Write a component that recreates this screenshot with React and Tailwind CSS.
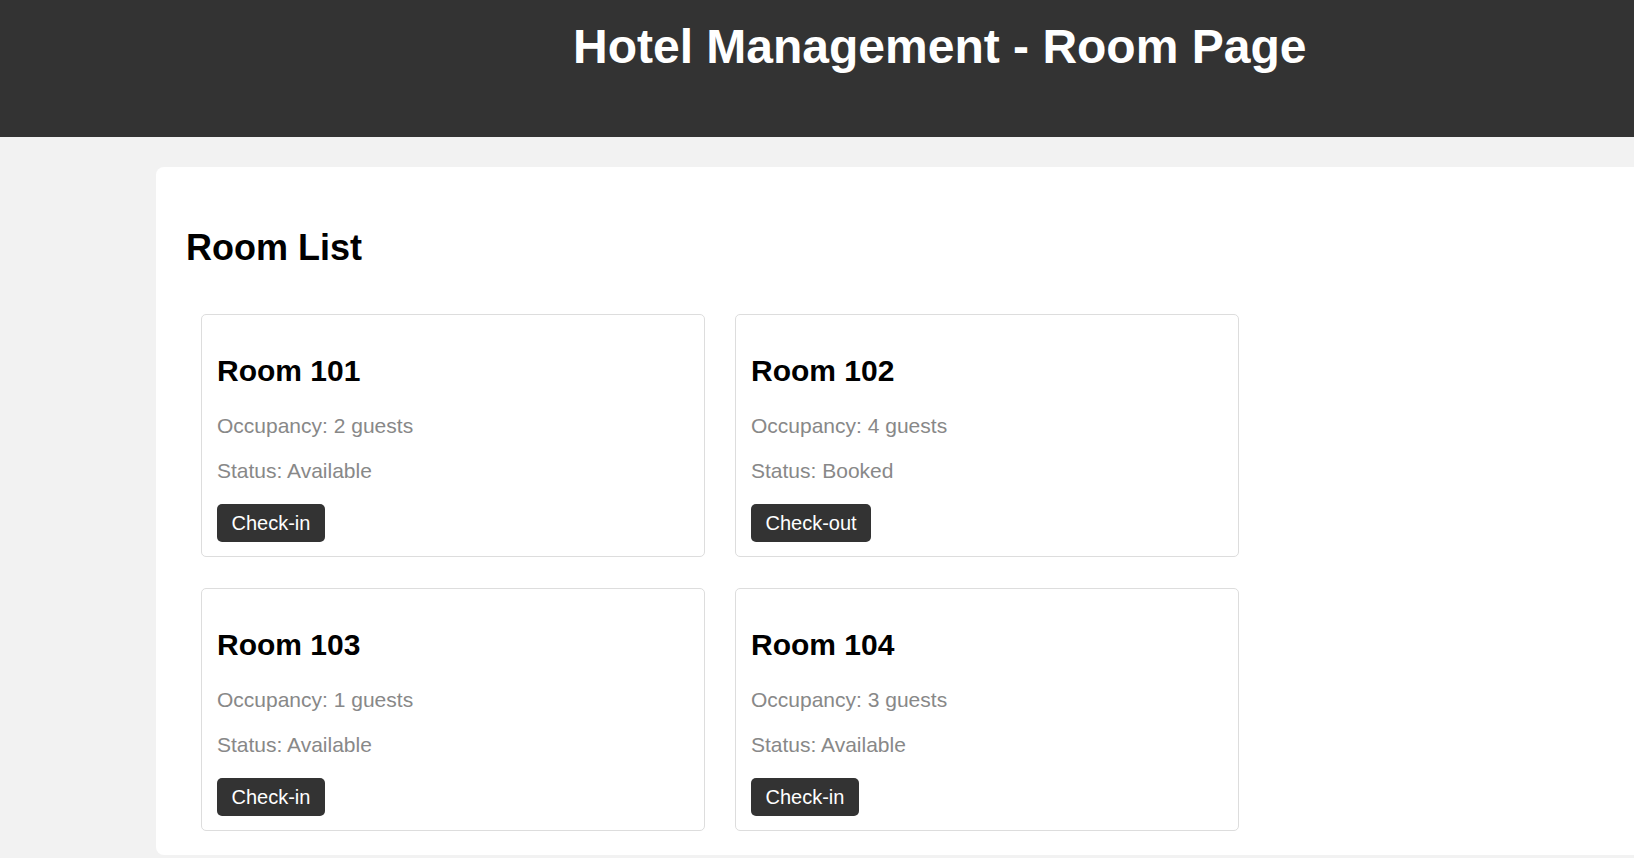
import React from 'react';

const rooms = [
  { id: 101, occupancy: 2, status: 'Available' },
  { id: 102, occupancy: 4, status: 'Booked' },
  { id: 103, occupancy: 1, status: 'Available' },
  { id: 104, occupancy: 3, status: 'Available' },
];

const RoomCard = ({ room }) => {
  const booked = room.status === 'Booked';
  return (
    <div className="w-[504px] h-[243px] border border-[#dddddd] rounded-[5px] bg-white px-[15px] pt-[39px]">
      <h2 className="text-[30px] leading-[34.5px] font-bold text-black">Room {room.id}</h2>
      <p className="mt-[25px] text-[21px] leading-[24px] text-[#888888]">
        Occupancy: {room.occupancy} guests
      </p>
      <p className="mt-[21px] text-[21px] leading-[24px] text-[#888888]">Status: {room.status}</p>
      <button className="mt-[21.5px] h-[38px] px-[14.5px] rounded-[5px] bg-[#333333] text-white text-[20px] leading-[23px]">
        {booked ? 'Check-out' : 'Check-in'}
      </button>
    </div>
  );
};

const App = () => {
  return (
    <div className="min-h-screen bg-[#f2f2f2] font-['Liberation_Sans',Arial,sans-serif]">
      {/* Header */}
      <header className="h-[137px] bg-[#333333] pt-[19px] pl-[573px]">
        <h1 className="text-[48px] leading-[55px] font-bold text-white whitespace-nowrap">
          Hotel Management - Room Page
        </h1>
      </header>

      {/* Room list */}
      <main className="ml-[156px] mt-[30px] bg-white rounded-l-[8px] pl-[30px] pt-[60px] pb-[24px]">
        <h2 className="text-[36px] leading-[41px] font-bold text-black">Room List</h2>
        <div className="ml-[15px] mt-[46px] grid grid-cols-[504px_504px] gap-x-[30px] gap-y-[31px]">
          {rooms.map((room) => (
            <RoomCard key={room.id} room={room} />
          ))}
        </div>
      </main>
    </div>
  );
};

export default App;
